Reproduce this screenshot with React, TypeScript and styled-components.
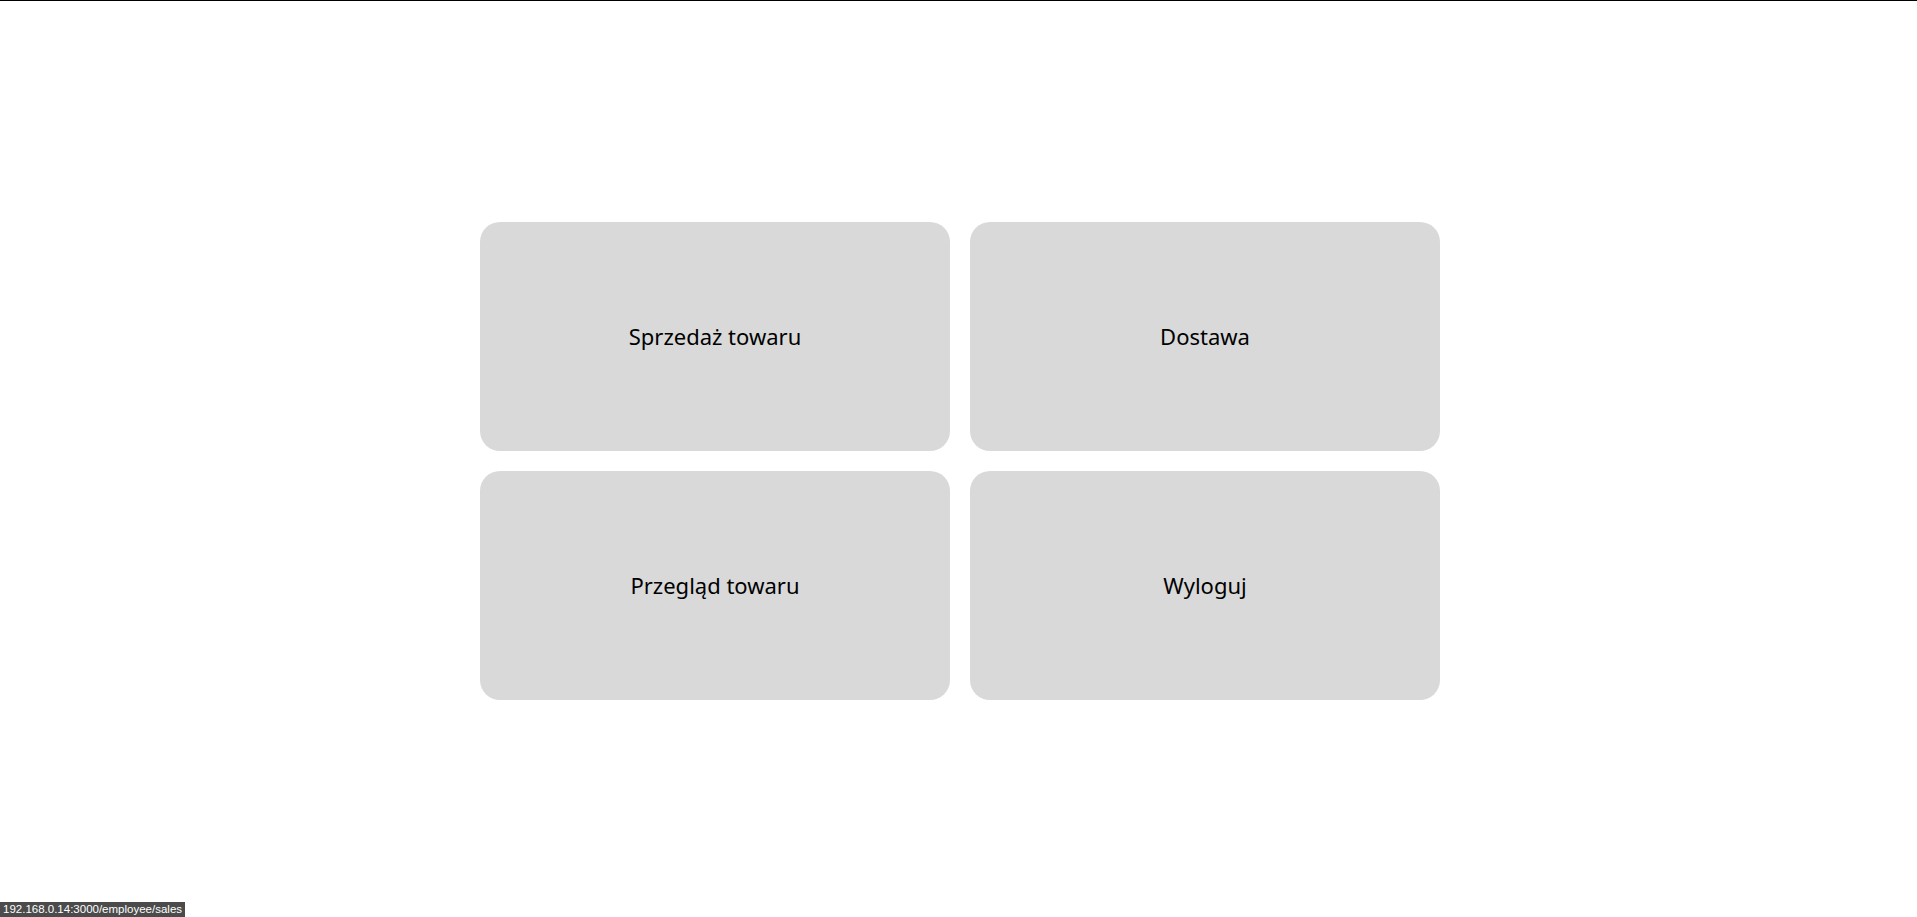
import styled, { createGlobalStyle } from "styled-components";

const GlobalStyle = createGlobalStyle`
  html, body {
    margin: 0;
    padding: 0;
    background: #ffffff;
  }
  body {
    font-family: "Noto Sans", "Open Sans", sans-serif;
  }
`;

const Page = styled.div`
  box-sizing: border-box;
  height: 100vh;
  border-top: 1px solid #000;
  display: flex;
  align-items: center;
  justify-content: center;
`;

const Menu = styled.div`
  display: grid;
  grid-template-columns: repeat(2, 470px);
  grid-auto-rows: 229px;
  gap: 20px;
  margin-left: 3px;
  margin-top: 3px;
`;

const Tile = styled.button`
  border: none;
  border-radius: 20px;
  background: #d9d9d9;
  color: #000;
  font-family: "Noto Sans", "Open Sans", sans-serif;
  font-size: 22px;
  display: flex;
  align-items: center;
  justify-content: center;
  cursor: pointer;
  padding: 0;
`;

const StatusBar = styled.div`
  position: fixed;
  left: 0;
  bottom: 0;
  height: 15px;
  padding: 0 3px;
  background: #4b4b4b;
  color: #fff;
  font-family: "Liberation Sans", Arial, sans-serif;
  font-size: 11.5px;
  line-height: 15px;
`;

const items = ["Sprzedaż towaru", "Dostawa", "Przegląd towaru", "Wyloguj"];

export default function App() {
  return (
    <>
      <GlobalStyle />
      <Page>
        <Menu>
          {items.map((label) => (
            <Tile key={label}>{label}</Tile>
          ))}
        </Menu>
      </Page>
      <StatusBar>192.168.0.14:3000/employee/sales</StatusBar>
    </>
  );
}
